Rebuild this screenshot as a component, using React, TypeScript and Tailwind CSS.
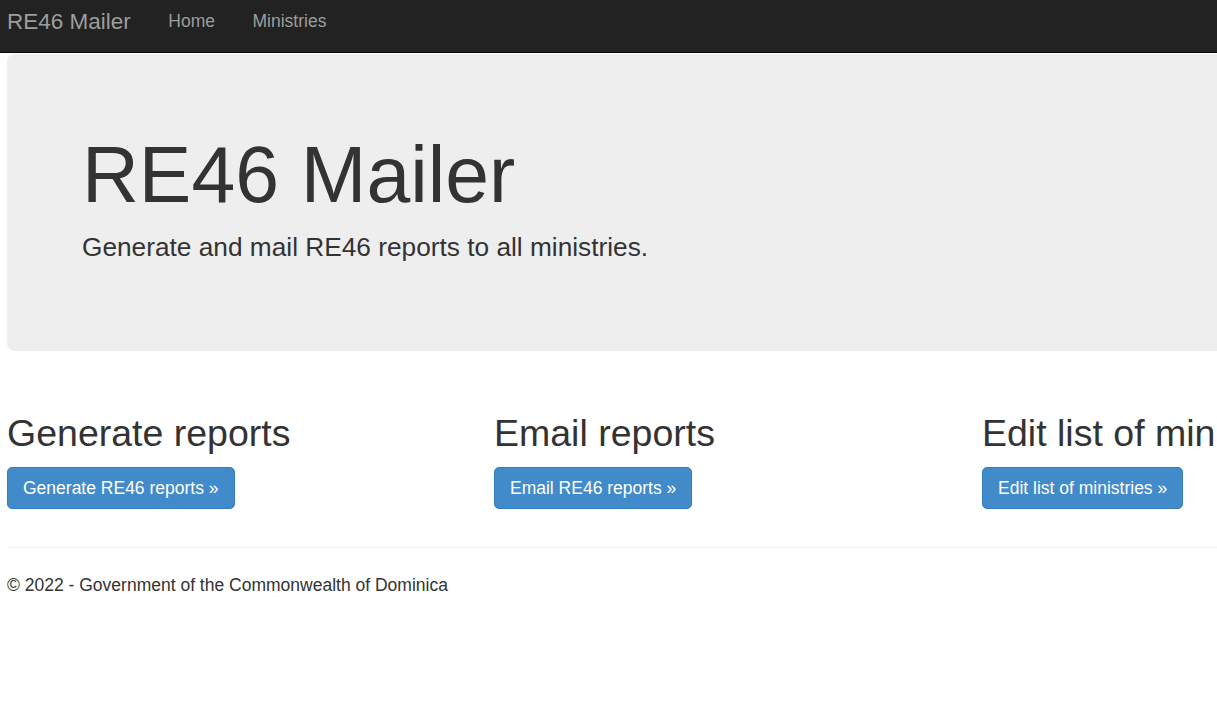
import React from "react";

const font = { fontFamily: '"Liberation Sans", Arial, Helvetica, sans-serif' };

function Col({ title, button, w }: { title: string; button: string; w: string }) {
  return (
    <div className={w + " shrink-0"}>
      <h2 className="text-[37.5px] leading-[1.1] font-normal text-[#333] m-0 whitespace-nowrap">{title}</h2>
      <div className="mt-[13px]">
        <a className="inline-block whitespace-nowrap bg-[#428bca] border border-[#357ebd] rounded-[5px] text-white text-[17.5px] leading-[25px] px-[15px] py-[7.5px] cursor-pointer">
          {button} &raquo;
        </a>
      </div>
    </div>
  );
}

export default function App() {
  return (
    <div className="w-full overflow-hidden bg-white min-h-[708px] text-[#333]" style={font}>
      <nav className="h-[53px] bg-[#222] border-b border-[#080808]">
        <div className="flex items-start pl-[7px] pt-[9px]">
          <span className="text-[22.5px] leading-[25px] text-[#9d9d9d] whitespace-nowrap">RE46 Mailer</span>
          <a className="ml-[18.75px] px-[18.75px] text-[17.5px] leading-[25px] text-[#9d9d9d]">Home</a>
          <a className="px-[18.75px] text-[17.5px] leading-[25px] text-[#9d9d9d]">Ministries</a>
        </div>
      </nav>
      <div className="pl-[7px] w-[1500px]">
        <div className="mt-px bg-[#eee] rounded-[7.5px] w-[1462.5px] pl-[75px] pt-[78px] pb-[85px]">
          <h1 className="text-[78.75px] leading-[1.1] font-normal text-[#333] m-0">RE46 Mailer</h1>
          <p className="mt-[10px] text-[26.25px] leading-[37.5px] text-[#333]">
            Generate and mail RE46 reports to all ministries.
          </p>
        </div>
        <div className="flex mt-[62px]">
          <Col w="w-[487px]" title="Generate reports" button="Generate RE46 reports" />
          <Col w="w-[488px]" title="Email reports" button="Email RE46 reports" />
          <Col w="w-[487px]" title="Edit list of ministries" button="Edit list of ministries" />
        </div>
        <hr className="mt-[38px] border-0 border-t border-[#eee] w-[1462.5px]" />
        <footer className="mt-[25px]">
          <p className="text-[17.5px] leading-[25px] text-[#333]">
            &copy; 2022 - Government of the Commonwealth of Dominica
          </p>
        </footer>
      </div>
    </div>
  );
}
